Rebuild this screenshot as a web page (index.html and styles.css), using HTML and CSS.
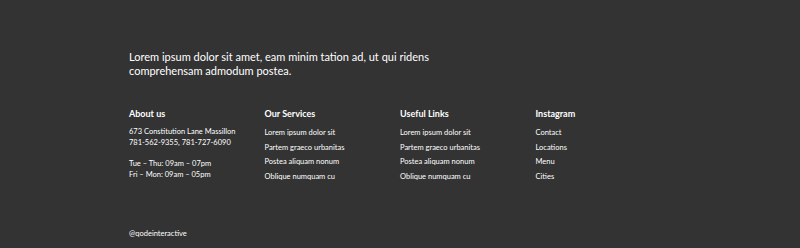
FILE: index.html
```html
<!DOCTYPE html>
<html>
<head>
<meta charset="utf-8">
<link rel="stylesheet" href="styles.css">
</head>
<body>
<footer class="footer">
  <div class="container">
    <p class="tagline">Lorem ipsum dolor sit amet, eam minim tation ad, ut qui ridens<br>comprehensam admodum postea.</p>
    <div class="cols">
      <div class="col">
        <h4 class="col-title">About us</h4>
        <p class="info">673 Constitution Lane Massillon<br>781-562-9355, 781-727-6090</p>
        <p class="info">Tue – Thu: 09am – 07pm<br>Fri – Mon: 09am – 05pm</p>
      </div>
      <div class="col">
        <h4 class="col-title">Our Services</h4>
        <ul class="links">
          <li>Lorem ipsum dolor sit</li>
          <li>Partem graeco urbanitas</li>
          <li>Postea aliquam nonum</li>
          <li>Oblique numquam cu</li>
        </ul>
      </div>
      <div class="col">
        <h4 class="col-title">Useful Links</h4>
        <ul class="links">
          <li>Lorem ipsum dolor sit</li>
          <li>Partem graeco urbanitas</li>
          <li>Postea aliquam nonum</li>
          <li>Oblique numquam cu</li>
        </ul>
      </div>
      <div class="col">
        <h4 class="col-title">Instagram</h4>
        <ul class="links">
          <li>Contact</li>
          <li>Locations</li>
          <li>Menu</li>
          <li>Cities</li>
        </ul>
      </div>
    </div>
    <p class="handle">@qodeinteractive</p>
  </div>
</footer>
</body>
</html>
```
FILE: styles.css
```css
html, body {
  margin: 0;
  padding: 0;
  background: #333333;
}
body {
  font-family: Lato, "Noto Sans", sans-serif;
  color: #ffffff;
  width: 800px;
  height: 248px;
  overflow: hidden;
}
.footer {
  padding-top: 50px;
}
.container {
  width: 542px;
  margin: 0 auto;
}
.tagline {
  margin: 0;
  font-size: 11px;
  line-height: 14px;
}
.cols {
  display: grid;
  grid-template-columns: repeat(4, 1fr);
  margin-top: 30px;
}
.col-title {
  margin: 0 0 6px;
  font-size: 9px;
  line-height: 12px;
  font-weight: 700;
}
.info {
  margin: 0 0 10px;
  font-size: 7.5px;
  line-height: 11px;
}
.links {
  list-style: none;
  margin: 0;
  padding: 0;
  font-size: 7.5px;
  line-height: 14.7px;
}
.links li {
  margin: 0;
}
.handle {
  margin: 39px 0 0;
  font-size: 7.5px;
  line-height: 10px;
}
```
